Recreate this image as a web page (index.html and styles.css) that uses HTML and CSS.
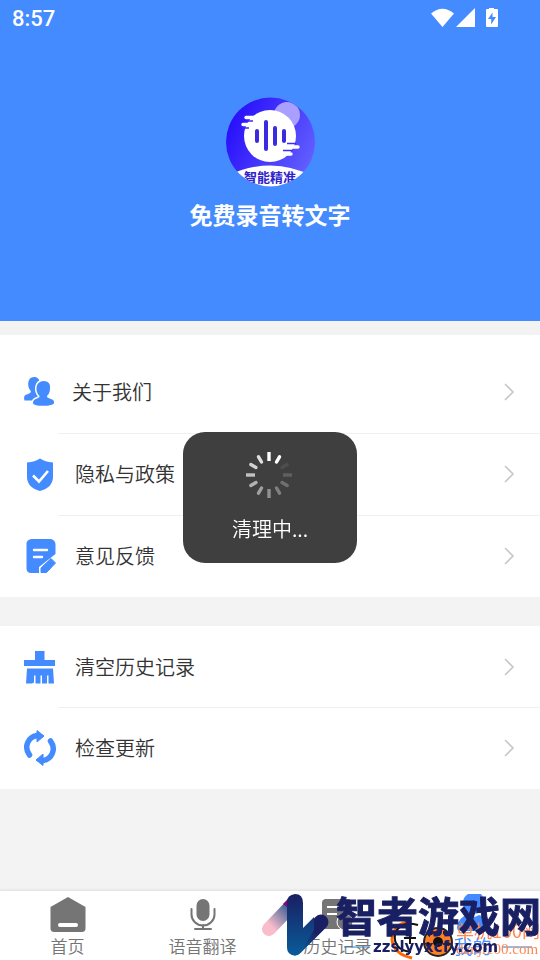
FILE: index.html
```html
<!DOCTYPE html>
<html lang="zh-CN">
<head>
<meta charset="utf-8">
<meta name="viewport" content="width=device-width, initial-scale=1">
<title>免费录音转文字</title>
<link rel="stylesheet" href="styles.css">
</head>
<body>
<header class="hero">
  <div class="status">
    <span>8:57</span>
    <svg class="status-icons" width="68" height="22" viewBox="0 0 68 22" fill="#fff" aria-hidden="true">
      <path d="M0 5.500Q11.500-4 23 5.500L11.500 19Z"/>
      <path d="M44 0V19H25Z"/>
      <path fill-rule="evenodd" d="M58-1h5v2h3q1 0 1 1v16q0 1-1 1H56q-1 0-1-1V2q0-1 1-1h2ZM61.500 4.500 57 11h3.200v5.500L65 9h-3.500Z"/>
    </svg>
  </div>
  <svg class="logo" viewBox="0 0 90 90" role="img" aria-label="智能精准">
    <defs>
      <linearGradient id="g" x1="0" y1="0.200" x2="1" y2="0.700"><stop offset="0.100" stop-color="#2a12fa"/><stop offset="1" stop-color="#6360ff"/></linearGradient>
      <clipPath id="c"><circle cx="45.500" cy="45" r="44.500"/></clipPath>
    </defs>
    <g clip-path="url(#c)">
      <rect width="90" height="90" fill="url(#g)"/>
      <circle cx="62" cy="18" r="13" fill="#a99fff"/>
      <circle cx="45" cy="39" r="26" fill="#fff"/>
      <g stroke="#fff" stroke-width="3.400" stroke-linecap="round"><path d="M21 20.500H34M18 27.500H30M58 50H73M56 57H66"/></g>
      <path d="M28 24H22M24 31H18M62 46.500H71M58 53.500H68" stroke="#3d2aff" stroke-width="1.500"/>
      <g stroke="#3a2be0" stroke-width="4" stroke-linecap="round"><path d="M32 34V44M41 25V52M50 31V47M59 34V44"/></g>
      <path d="M0 80Q45 57 90 80V90H0Z" fill="#fff"/>
      <text x="45" y="85" text-anchor="middle" class="logo-text">智能精准</text>
    </g>
  </svg>
  <h1>免费录音转文字</h1>
</header>

<main>
  <nav class="group group-first">
    <a class="row" href="#about">
      <svg class="icon" viewBox="0 0 36 36" aria-hidden="true"><path d="M12 3c4 0 5.500 2.500 5.500 6 0 4-1 6.500-3 8.500 0 2 1 3 4 4 3 1 4 2.500 4 5H2.500c-1-4.500 0-5.500 3.500-6.500 3-1 3-2 2.500-3.500C5 13 5 3 12 3Z" fill="#438bff"/><path d="M21.500 7c5 0 7 3 6.500 7 0 4-1 6-3 8 0 1.500 1 2 4 3s3 2 3 4c0 3.500-21 4-21 0 0-2.500 1-3.500 4-4.500 2-1 3-1.500 2.500-2.500-5-5-4-15 4-15Z" fill="#438bff" stroke="#fff" stroke-width="3" paint-order="stroke"/></svg>
      <span class="label label-about">关于我们</span>
      <svg class="chevron" viewBox="0 0 12 20" aria-hidden="true"><path d="M2 2 10 10 2 18"/></svg>
    </a>
    <a class="row" href="#privacy">
      <svg class="icon" viewBox="0 0 36 36" aria-hidden="true"><path d="M18 2.500Q23 6 31 6.500V21c0 7-5 12-13 14C10 33 5 28 5 21V6.500Q13 6 18 2.500Z" fill="#438bff"/><path d="m11 19.500 6 6L26 15" fill="none" stroke="#fff" stroke-width="2.600"/></svg>
      <span class="label">隐私与政策</span>
      <svg class="chevron" viewBox="0 0 12 20" aria-hidden="true"><path d="M2 2 10 10 2 18"/></svg>
    </a>
    <a class="row" href="#feedback">
      <svg class="icon" viewBox="0 0 36 36" aria-hidden="true"><path d="M9 1H29Q33 2 33.500 6V16L17 29V35H9Q5 35 4.500 31V5Q5 2 9 1Z" fill="#438bff"/><path d="m29 20.500 4.500 4.500-9 9.500H19V30Z" fill="#438bff" stroke="#438bff" stroke-linejoin="round"/><path d="M12 12H25M12 19H20" stroke="#fff" stroke-width="2.400" stroke-linecap="round"/></svg>
      <span class="label">意见反馈</span>
      <svg class="chevron" viewBox="0 0 12 20" aria-hidden="true"><path d="M2 2 10 10 2 18"/></svg>
    </a>
  </nav>
  <nav class="group">
    <a class="row" href="#clear">
      <svg class="icon" viewBox="0 0 36 36" aria-hidden="true"><path d="M13 2h9.500v9H33v6H2v-6h11ZM5 19.500H31l1 15H26.500v-8h-1.500v8h-5v-8h-1.500v8h-5v-8h-1.500v7l-2 1H4Z" fill="#438bff"/></svg>
      <span class="label">清空历史记录</span>
      <svg class="chevron" viewBox="0 0 12 20" aria-hidden="true"><path d="M2 2 10 10 2 18"/></svg>
    </a>
    <a class="row" href="#update">
      <svg class="icon" viewBox="0 0 36 36" aria-hidden="true"><g id="arc"><path d="M7.500 25C1.500 17 6 7 15 5.500" fill="none" stroke="#438bff" stroke-width="5.500" stroke-linecap="round"/><path d="M15 .5 22 6l-7 6Z" fill="#438bff" stroke="#438bff" stroke-linejoin="round"/></g><use href="#arc" transform="rotate(180 18 18)"/></svg>
      <span class="label">检查更新</span>
      <svg class="chevron" viewBox="0 0 12 20" aria-hidden="true"><path d="M2 2 10 10 2 18"/></svg>
    </a>
  </nav>
</main>

<nav class="tabs">
  <a class="tab" href="#home">
    <svg viewBox="0 0 36 36" aria-hidden="true"><path d="M18 0 35.500 10V32q-.5 3-3.500 3H4Q1 35 .5 32V10Z" fill="#757575"/><path d="M10 28H26" stroke="#fff" stroke-width="4" stroke-linecap="round"/></svg>
    <span>首页</span>
  </a>
  <a class="tab" href="#translate">
    <svg viewBox="0 0 36 36" aria-hidden="true"><rect x="11.500" y="2" width="13" height="22" rx="6.500" fill="#757575"/><path d="M6.500 12V17.500a11.500 11 0 0 0 23 0V12M18 28V32M10 32H26" fill="none" stroke="#757575" stroke-width="2" stroke-linecap="round"/></svg>
    <span>语音翻译</span>
  </a>
  <a class="tab" href="#history">
    <svg viewBox="0 0 36 36" aria-hidden="true"><path d="M5 2H29Q32 3 32 6V32H5Q2 31 2 28V5Q2 3 5 2Z" fill="#757575"/><path d="M7 10H21M7 17H17" stroke="#fff" stroke-width="2"/><circle cx="25" cy="25" r="8" fill="#757575" stroke="#fff"/></svg>
    <span>历史记录</span>
  </a>
  <a class="tab tab-active" href="#mine">
    <svg viewBox="0 0 36 36" aria-hidden="true"><path d="M13-3H26q3 3 3 9 0 6-4 9-7 4-13 0-4-4-4-9 0-6 5-9ZM5 34q-3 0-3-4Q4 20 12 18q6 4 12 0 9 2 10 12 0 4-3 4Z" fill="#438bff"/></svg>
    <span>我的</span>
  </a>
</nav>

<div class="toast" role="status">
  <svg width="48" height="48" viewBox="-23 -24 48 48" stroke="#fff" stroke-width="3.400" aria-hidden="true">
    <path d="M0-23V-14"/>
    <g stroke-linecap="round">
    <path d="M0-21V-15" transform="rotate(30)"/>
    <path d="M0-21V-15" transform="rotate(60)" opacity=".08"/>
    <path d="M0-21V-15" transform="rotate(120)" opacity=".25"/>
    <path d="M0-21V-15" transform="rotate(150)" opacity=".33"/>
    <path d="M0-21V-15" transform="rotate(210)" opacity=".5"/>
    <path d="M0-21V-15" transform="rotate(240)" opacity=".6"/>
    <path d="M0-21V-15" transform="rotate(300)" opacity=".76"/>
    <path d="M0-21V-15" transform="rotate(330)" opacity=".83"/>
    </g>
    <path d="M0-23V-14" transform="rotate(90)" opacity=".17"/>
    <path d="M0-23V-14" transform="rotate(180)" opacity=".42"/>
    <path d="M0-23V-14" transform="rotate(270)" opacity=".68"/>
  </svg>
  <span>清理中...</span>
</div>

<div class="stamp" aria-hidden="true">
  <svg class="stamp-art" viewBox="0 0 280 70">
    <defs>
      <linearGradient id="n1" x1="0" y1="1" x2="1" y2="0"><stop offset="0.100" stop-color="#f8bccb"/><stop offset="1" stop-color="#164d88"/></linearGradient>
      <linearGradient id="n2" x1="0" y1="0" x2="0" y2="1"><stop offset="0" stop-color="#191f63"/><stop offset="1" stop-color="#095c99"/></linearGradient>
      <linearGradient id="n3" x1="0" y1="1" x2="1" y2="0"><stop offset="0.100" stop-color="#095c99"/><stop offset="0.700" stop-color="#191f63"/></linearGradient>
    </defs>
    <path d="M9 39 33 14" stroke="url(#n1)" stroke-width="14" stroke-linecap="round"/>
    <path d="M23 14 31 6V20Z" fill="#8b0085"/>
    <path d="M35 58 61 32" stroke="url(#n3)" stroke-width="15" stroke-linecap="round"/>
    <path d="M35 4q8 0 8 9V38L54 27V40L43 58q-3 7-8 7.500-8-.5-8-8.500V12q0-7 8-8Z" fill="url(#n2)"/>
    <path d="M84 57H110M242 57H272" stroke="#3978b8"/>
    <path d="M148 32q-14 2-16 17 1 15 20 19" fill="none" stroke="#f60" stroke-width="3"/>
    <path d="M158 35q-18-5-23 9-2 16 16 18" fill="none" stroke="#111" stroke-width="2"/>
    <path d="M150 42V54M144 48H156" stroke="#111" stroke-width="2"/>
    <circle cx="178" cy="52" r="14" fill="#ff7d26" stroke="#222" stroke-width="2"/>
    <circle cx="178" cy="52" r="5" fill="#111"/><circle cx="171" cy="43" r="2" fill="#111"/><circle cx="185" cy="43" r="2" fill="#111"/><circle cx="168" cy="54" r="2" fill="#111"/><circle cx="188" cy="54" r="2" fill="#111"/>
    <text x="196" y="48" class="orange-title">单机100网</text>
    <text x="196" y="64" class="orange-url">danji100.com</text>
    <text x="76" y="42" class="navy-title">智者游戏网</text>
    <text x="113" y="62" class="navy-url">zzslyyxcfy.com</text>
  </svg>
</div>
</body>
</html>
```
FILE: styles.css
```css
* { box-sizing: border-box; }
body {
  margin: 0;
  min-height: 100vh;
  display: flex;
  flex-direction: column;
  background: #f3f3f3;
  color: #333;
  font-family: "Noto Sans CJK SC", sans-serif;
  font-weight: 350;
}
a { color: inherit; text-decoration: none; }
svg { display: block; flex: none; }
.hero {
  display: flex;
  flex-direction: column;
  align-items: center;
  padding-bottom: 90px;
  background: #438bff;
  color: #fff;
}
.status {
  width: 100%;
  height: 37px;
  padding: 0 41px 0 12px;
  display: flex;
  align-items: center;
  justify-content: space-between;
  font: 500 22px Roboto, sans-serif;
}
.logo { width: 90px; height: 90px; margin-top: 60px; }
.logo-text { font: 700 13px "Noto Sans CJK SC", sans-serif; fill: #3023cc; }
h1 {
  margin: 10px 0 0;
  font-size: 23px;
  line-height: 34px;
  font-weight: 700;
}
.group { margin-bottom: 29px; background: #fff; }
.group-first { margin-top: 14px; padding-top: 16px; }
.row {
  position: relative;
  display: flex;
  align-items: center;
  height: 82px;
  padding: 0 25px 0 22px;
}
.group:last-child .row:first-child { height: 81px; }
.row + .row::before {
  content: "";
  position: absolute;
  top: 0;
  left: 58px;
  right: 0;
  height: 1px;
  background: #f0f0f0;
}
.icon { width: 36px; height: 36px; }
.label { flex: 1; margin-left: 17px; font-size: 20px; line-height: 30px; }
.label-about { margin-left: 14px; }
.chevron { width: 12px; height: 20px; fill: none; stroke: #c8c8c8; stroke-width: 1.6; }
.tabs {
  display: grid;
  grid-template-columns: repeat(4, 1fr);
  height: 69px;
  margin-top: auto;
  background: #fff;
  box-shadow: 0 -1px 2px #ddd;
}
.tab {
  display: flex;
  flex-direction: column;
  align-items: center;
  padding-top: 6px;
  color: #757575;
  font-size: 17px;
  line-height: 25px;
}
.tab svg { width: 36px; height: 36px; overflow: visible; }
.tab-active { color: #438bff; font-size: 19px; }
.toast {
  position: fixed;
  top: 432px;
  left: 50%;
  transform: translateX(-50%);
  width: 174px;
  padding: 19px 0;
  display: flex;
  flex-direction: column;
  align-items: center;
  gap: 15px;
  border-radius: 22px;
  background: rgba(51, 51, 51, .94);
  color: #fff;
  font-size: 20px;
  line-height: 30px;
}
.stamp { position: fixed; right: 0; bottom: 0; pointer-events: none; }
.stamp-art { width: 280px; height: 70px; overflow: visible; }
.navy-title { font: 700 41px "Noto Sans CJK SC", sans-serif; fill: #191f63; stroke: #191f63; }
.navy-url { font: 700 15px "DejaVu Sans", sans-serif; fill: #191f63; }
.orange-title { font: 400 18px "Noto Sans CJK SC", sans-serif; fill: #ff8850; }
.orange-url { font: 400 15px "Liberation Serif", serif; fill: #ff8850; }
```
